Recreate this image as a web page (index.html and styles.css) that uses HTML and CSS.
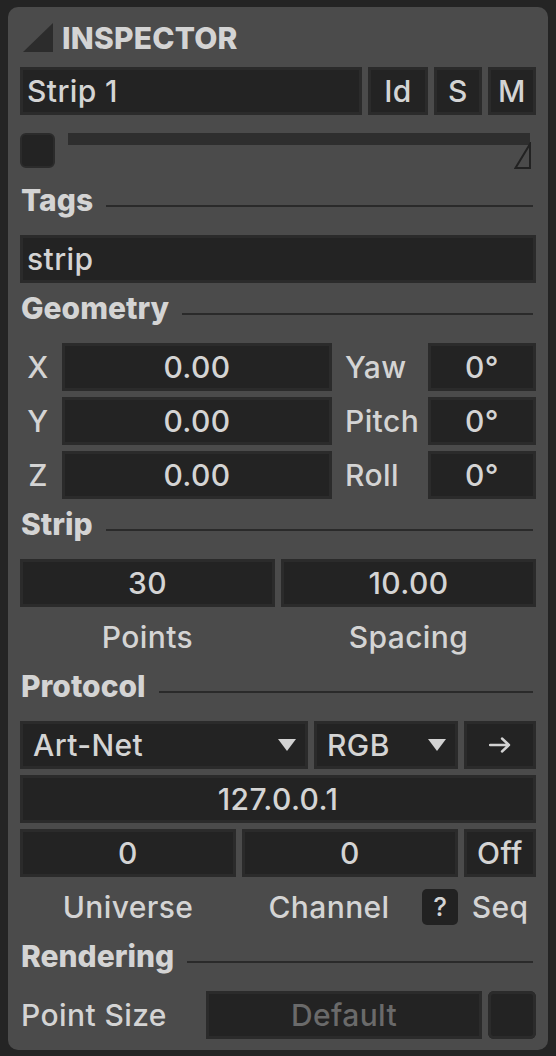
FILE: index.html
```html
<!DOCTYPE html>
<html>
<head>
<meta charset="utf-8">
<link rel="stylesheet" href="styles.css">
</head>
<body>
<div class="panel">
  <div class="title">
    <svg class="tri" width="30" height="29" viewBox="0 0 30 29"><polygon points="30,0 30,29 0,29" fill="#2c2c2c"/></svg>
    <span>INSPECTOR</span>
  </div>

  <div class="row row1">
    <div class="field left name">Strip 1</div>
    <div class="field btn w60">Id</div>
    <div class="field btn w48">S</div>
    <div class="field btn w48">M</div>
  </div>

  <div class="row row2">
    <div class="check"></div>
    <div class="slider">
      <div class="bar"></div>
      <svg class="resize" width="18" height="28" viewBox="0 0 18 28"><polygon points="16,2 16,26 1.5,26" fill="none" stroke="#222" stroke-width="2"/></svg>
    </div>
  </div>

  <div class="heading"><span>Tags</span><div class="rule"></div></div>
  <div class="field left full gap19">strip</div>

  <div class="heading"><span>Geometry</span><div class="rule"></div></div>
  <div class="geo">
    <div class="axis">X</div><div class="field">0.00</div><div class="rlabel">Yaw</div><div class="field">0°</div>
    <div class="axis">Y</div><div class="field">0.00</div><div class="rlabel">Pitch</div><div class="field">0°</div>
    <div class="axis">Z</div><div class="field">0.00</div><div class="rlabel">Roll</div><div class="field">0°</div>
  </div>

  <div class="heading"><span>Strip</span><div class="rule"></div></div>
  <div class="row two gap19">
    <div class="field">30</div>
    <div class="field">10.00</div>
  </div>
  <div class="row two labels">
    <div class="lbl">Points</div>
    <div class="lbl">Spacing</div>
  </div>

  <div class="heading"><span>Protocol</span><div class="rule"></div></div>
  <div class="row proto gap19">
    <div class="field drop"><span>Art-Net</span><svg width="18" height="12" viewBox="0 0 18 12"><polygon points="0,0 18,0 9,12" fill="#d2d2d2"/></svg></div>
    <div class="field drop"><span>RGB</span><svg width="18" height="12" viewBox="0 0 18 12"><polygon points="0,0 18,0 9,12" fill="#d2d2d2"/></svg></div>
    <div class="field"><svg width="22" height="16" viewBox="0 0 22 16"><path d="M1 8 H20 M13 1.5 L20 8 L13 14.5" fill="none" stroke="#d2d2d2" stroke-width="2.4" stroke-linecap="round" stroke-linejoin="round"/></svg></div>
  </div>
  <div class="field full gap6">127.0.0.1</div>
  <div class="row uni gap6">
    <div class="field">0</div>
    <div class="field">0</div>
    <div class="field">Off</div>
  </div>
  <div class="row uni labels">
    <div class="lbl">Universe</div>
    <div class="chan"><div class="lbl grow">Channel</div><div class="help">?</div></div>
    <div class="lbl">Seq</div>
  </div>

  <div class="heading"><span>Rendering</span><div class="rule"></div></div>
  <div class="row psize gap19">
    <div class="plabel">Point Size</div>
    <div class="field dim">Default</div>
    <div class="field sq"></div>
  </div>
</div>
</body>
</html>
```

FILE: styles.css
```css
* { box-sizing: border-box; }
html, body { margin: 0; padding: 0; }
body {
  background: #242424;
  font-family: "Inter", "Noto Sans", sans-serif;
  color: #d4d4d4;
  font-size: 30px;
  font-weight: 500;
  letter-spacing: 0.4px;
}
.panel {
  margin: 7px 8px 0 8px;
  width: 540px;
  height: 1043px;
  background: #4b4b4b;
  border-radius: 10px;
  padding: 16px 12px 11px 12px;
  display: flex;
  flex-direction: column;
}
.title {
  height: 36px;
  display: flex;
  align-items: flex-start;
  padding-left: 3px;
}
.title .tri { display: block; flex: none; }
.title span {
  margin-left: 9px;
  font-weight: 800;
  font-size: 30px;
  line-height: 32px;
  margin-top: -1px;
  letter-spacing: 0.2px;
}
.row { display: flex; gap: 6px; }
.row1 { margin-top: 8px; }
.field {
  height: 48px;
  background: #232323;
  box-shadow: inset 0 0 0 3px #2b2b2b;
  display: flex;
  align-items: center;
  justify-content: center;
  line-height: 48px;
  white-space: nowrap;
}
.field.left { justify-content: flex-start; padding-left: 7px; }
.name { width: 342px; }
.w60 { width: 60px; }
.w48 { width: 48px; }
.full { width: 516px; }
.gap19 { margin-top: 19px; }
.gap6 { margin-top: 6px; }

.row2 { margin-top: 18px; gap: 13px; height: 37px; }
.check {
  width: 35px; height: 35px;
  background: #232323;
  border: 2px solid #2b2b2b;
  border-radius: 6px;
}
.slider {
  flex: 1;
  display: flex;
  flex-direction: column;
  margin-right: 5px;
}
.bar { height: 12px; background: #2e2e2e; margin-right: 1px; }
.resize { align-self: flex-end; margin-top: -3px; margin-right: -1px; display: block; }

.heading {
  margin-top: 9px;
  height: 32px;
  display: flex;
  align-items: flex-start;
  padding-left: 1px;
}
.heading span {
  font-weight: 800;
  font-size: 30px;
  line-height: 32px;
  letter-spacing: 0;
}
.heading .rule {
  flex: 1;
  height: 2px;
  background: #2a2a2a;
  margin-top: 21px;
  margin-left: 13px;
  margin-right: 3px;
}
.row2 + .heading { margin-top: 14px; }

.geo {
  margin-top: 19px;
  display: grid;
  grid-template-columns: 36px 270px 84px 108px;
  grid-auto-rows: 48px;
  gap: 6px;
}
.axis { text-align: center; line-height: 48px; }
.rlabel { line-height: 48px; padding-left: 7px; }

.two .field, .two .lbl { width: 255px; }
.labels { margin-top: 6px; height: 48px; }
.lbl { text-align: center; line-height: 48px; }

.proto .field:nth-child(1) { width: 288px; }
.proto .field:nth-child(2) { width: 144px; }
.proto .field:nth-child(3) { width: 72px; }
.drop { justify-content: space-between; padding: 0 12px 0 13px; }
.drop svg, .proto svg { display: block; }

.uni > :nth-child(1) { width: 216px; }
.uni > :nth-child(2) { width: 216px; }
.uni > :nth-child(3) { width: 72px; }
.chan { display: flex; align-items: center; gap: 6px; }
.grow { flex: 1; }
.help {
  width: 36px; height: 36px;
  background: #222;
  border-radius: 5px;
  text-align: center;
  line-height: 36px;
  font-size: 26px;
  letter-spacing: 0;
}

.psize { align-items: center; }
.plabel { width: 180px; padding-left: 1px; line-height: 48px; }
.dim { width: 276px; color: #6a6a6a; }
.sq { width: 48px; border-radius: 6px; }
```
